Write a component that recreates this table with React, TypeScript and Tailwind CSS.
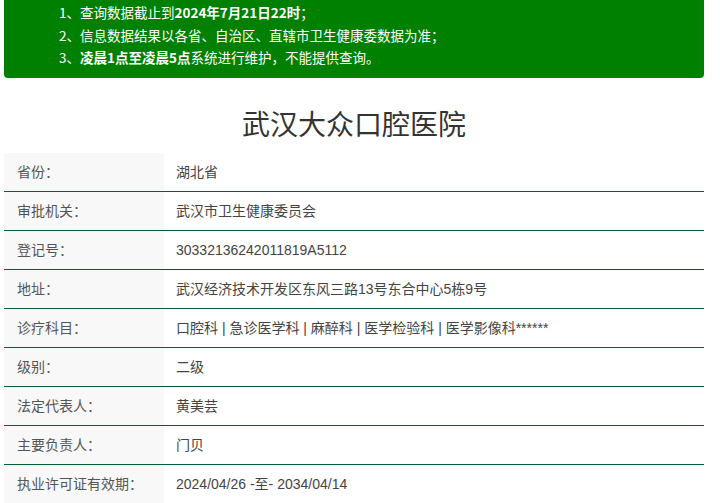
import React from "react";

const rows: [string, string][] = [
  ["省份：", "湖北省"],
  ["审批机关：", "武汉市卫生健康委员会"],
  ["登记号：", "30332136242011819A5112"],
  ["地址：", "武汉经济技术开发区东风三路13号东合中心5栋9号"],
  ["诊疗科目：", "口腔科 | 急诊医学科 | 麻醉科 | 医学检验科 | 医学影像科******"],
  ["级别：", "二级"],
  ["法定代表人：", "黄美芸"],
  ["主要负责人：", "门贝"],
  ["执业许可证有效期：", "2024/04/26 -至- 2034/04/14"],
];

export default function App() {
  return (
    <div
      className="w-[720px] h-[503px] overflow-hidden bg-white"
      style={{ fontFamily: '"Liberation Sans", "Noto Sans CJK SC", sans-serif' }}
    >
      <div className="mx-[4px] w-[700px] h-[78px] bg-[#008000] rounded-b-[4px] pl-[55px] pt-[1px] text-white text-[13.5px] leading-[22.5px]" style={{ fontFamily: '"Noto Sans CJK SC", sans-serif' }}>
        <div>1、查询数据截止到<b>2024年7月21日22时</b>；</div>
        <div>2、信息数据结果以各省、自治区、直辖市卫生健康委数据为准；</div>
        <div>3、<b>凌晨1点至凌晨5点</b>系统进行维护，不能提供查询。</div>
      </div>
      <div className="h-[75px] pt-[14px] flex items-center justify-center text-[28px] text-[#333] pr-[12px]" style={{ fontFamily: '"Noto Sans CJK SC", sans-serif' }}>
        武汉大众口腔医院
      </div>
      <div className="mx-[4px] w-[700px]">
        {rows.map(([k, v], i) => (
          <div
            key={i}
            className={`flex h-[39px] ${i < rows.length - 1 ? "border-b border-[#00602f]" : ""}`}
          >
            <div className="w-[160px] bg-[#f8f8f8] pl-[13px] flex items-center text-[14px] text-[#555]">
              {k}
            </div>
            <div className="flex-1 pl-[12px] flex items-center text-[14px] text-[#444]">
              {v}
            </div>
          </div>
        ))}
      </div>
    </div>
  );
}
